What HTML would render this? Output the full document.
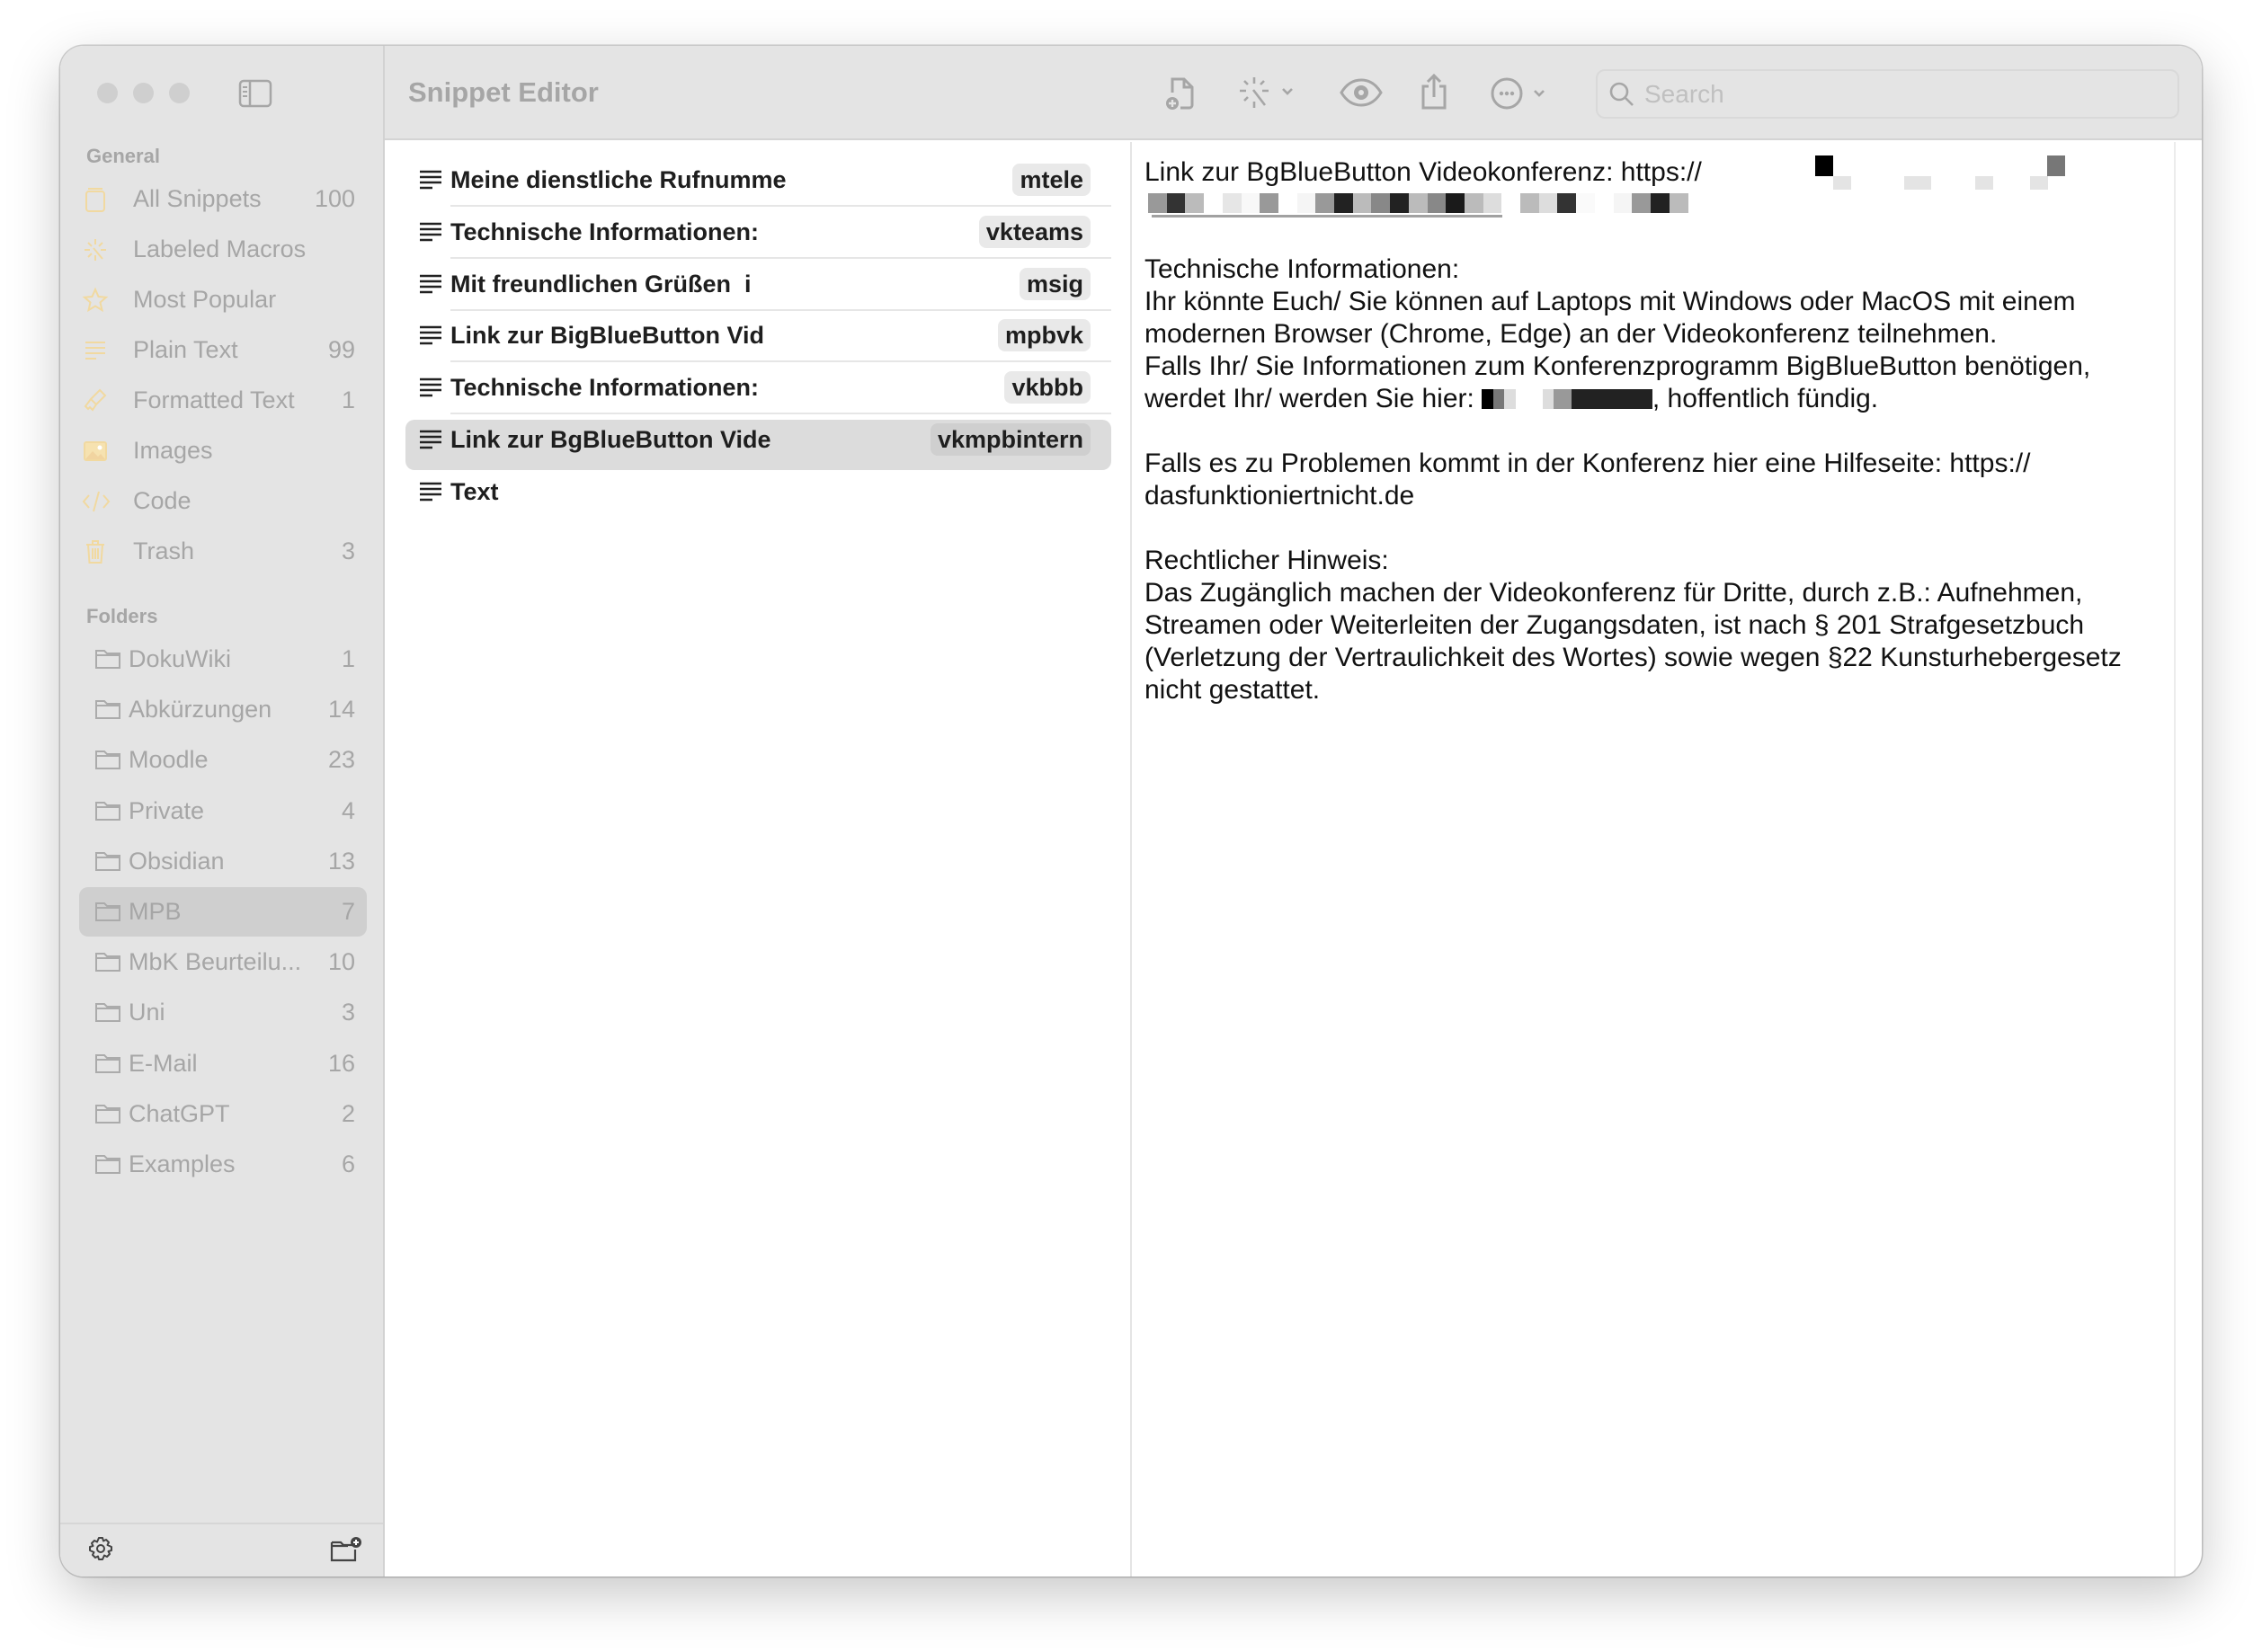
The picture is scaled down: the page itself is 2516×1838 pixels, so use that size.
<!DOCTYPE html>
<html><head><meta charset="utf-8"><style>
*{margin:0;padding:0;box-sizing:border-box}
body{width:2516px;height:1838px;background:#fff;position:relative;overflow:hidden;font-family:"Liberation Sans",Helvetica,Arial,sans-serif}
.win{position:absolute;left:67px;top:51px;width:2382px;height:1703px;border-radius:26px;background:#fff;overflow:hidden;box-shadow:0 20px 60px rgba(0,0,0,.22),0 0 0 1.5px rgba(0,0,0,.18)}
.side{position:absolute;left:0;top:0;width:361px;height:1703px;background:#e4e4e4;border-right:2px solid #d2d2d2}
.tb{position:absolute;left:361px;top:0;right:0;height:105px;background:#e4e4e4;border-bottom:2px solid #d4d4d4}
.a{position:absolute}
.sh{position:absolute;left:29px;font-size:22px;font-weight:bold;color:#a6a6a6}
.si{position:absolute;left:0;width:361px;height:56px;font-size:27px;color:#a6a6a6;line-height:56px}
.si .t{position:absolute;left:81px}
.si .c{position:absolute;right:33px}
.si svg{position:absolute;left:24px;top:14px}
.row{position:absolute;left:384px;width:785px;height:56px;line-height:56px;font-size:27px;font-weight:bold;color:#1e1e1e}
.row .t{position:absolute;left:50px}
.row svg{position:absolute;left:14px;top:16px}
.row .b{position:absolute;right:23px;top:10px;height:36px;line-height:36px;padding:0 8px;border-radius:8px;background:#e9e9e9}
.sep{position:absolute;left:434px;width:735px;height:2px;background:#e6e6e6}
.ed{position:absolute;left:1206px;top:123px;font-size:30px;color:#111;line-height:36px;white-space:pre}
.px{position:absolute;height:22px}
.ib{display:inline-block;width:190px;height:22px;vertical-align:-2px;margin-left:8px;background:linear-gradient(90deg,#000 0 13px,#777 13px 25px,#ddd 25px 38px,#fff 38px 68px,#ddd 68px 80px,#999 80px 100px,#222 100px 190px)}
</style></head><body>
<div class="win">
 <div class="side">
  <div class="a" style="left:41px;top:41px;width:23px;height:23px;border-radius:50%;background:#cfcfcf"></div>
  <div class="a" style="left:81px;top:41px;width:23px;height:23px;border-radius:50%;background:#cfcfcf"></div>
  <div class="a" style="left:121px;top:41px;width:23px;height:23px;border-radius:50%;background:#cfcfcf"></div>
  <svg class="a" style="left:198px;top:37px" width="38" height="32" viewBox="0 0 38 32"><rect x="2" y="2" width="34" height="28" rx="4" fill="none" stroke="#a6a6a6" stroke-width="2.5"/><line x1="13" y1="2" x2="13" y2="30" stroke="#a6a6a6" stroke-width="2.5"/><line x1="5" y1="9" x2="10" y2="9" stroke="#a6a6a6" stroke-width="2"/><line x1="5" y1="14" x2="10" y2="14" stroke="#a6a6a6" stroke-width="2"/><line x1="5" y1="19" x2="10" y2="19" stroke="#a6a6a6" stroke-width="2"/></svg>
  <div class="sh" style="top:110px">General</div>
  <div class="si" style="top:142px"><svg width="30" height="30" viewBox="0 0 30 30"><rect x="5" y="6" width="20" height="22" rx="3" fill="none" stroke="#f1d9a0" stroke-width="2"/><line x1="7" y1="3" x2="23" y2="3" stroke="#f1d9a0" stroke-width="2"/></svg><span class="t">All Snippets</span><span class="c">100</span></div>
  <div class="si" style="top:198px"><svg width="30" height="30" viewBox="0 0 30 30" stroke="#f1d9a0" stroke-width="2"><path d="M15 3v6M15 21v6M3 15h6M21 15h6M7 7l4 4M23 7l-4 4M7 23l4-4M13 13l10 12"/></svg><span class="t">Labeled Macros</span></div>
  <div class="si" style="top:254px"><svg width="30" height="30" viewBox="0 0 30 30"><path d="M15 3l3.5 8 8.5.8-6.5 5.7 2 8.5L15 21.5 7.5 26l2-8.5L3 11.8l8.5-.8z" fill="none" stroke="#f1d9a0" stroke-width="2"/></svg><span class="t">Most Popular</span></div>
  <div class="si" style="top:310px"><svg width="30" height="30" viewBox="0 0 30 30" stroke="#f1d9a0" stroke-width="2"><path d="M4 6h22M4 12h22M4 18h22M4 24h12"/></svg><span class="t">Plain Text</span><span class="c">99</span></div>
  <div class="si" style="top:366px"><svg width="30" height="30" viewBox="0 0 30 30" fill="none" stroke="#f1d9a0" stroke-width="2"><path d="M20 3l6 6-10 10-6-6zM10 13l-6 8 3 3 2-2 3 3 4-6"/></svg><span class="t">Formatted Text</span><span class="c">1</span></div>
  <div class="si" style="top:422px"><svg width="30" height="30" viewBox="0 0 30 30"><rect x="3" y="5" width="24" height="20" rx="2" fill="#f6e2b0" stroke="#f1d9a0" stroke-width="2"/><path d="M4 24l8-9 6 6 3-3 5 6z" fill="#f1d4a0"/><circle cx="20" cy="11" r="2.5" fill="#fff"/></svg><span class="t">Images</span></div>
  <div class="si" style="top:478px"><svg width="32" height="30" viewBox="0 0 32 30" fill="none" stroke="#f1d9a0" stroke-width="2"><path d="M8 8l-6 7 6 7M24 8l6 7-6 7M19 4l-6 22"/></svg><span class="t">Code</span></div>
  <div class="si" style="top:534px"><svg width="30" height="30" viewBox="0 0 30 30" fill="none" stroke="#f1d9a0" stroke-width="2"><path d="M5 7h20M12 7V3h6v4M7 7l1.5 20h13L23 7M12 11v12M15 11v12M18 11v12"/></svg><span class="t">Trash</span><span class="c">3</span></div>
  <div class="sh" style="top:622px">Folders</div>
  <div class="a" style="left:21px;top:936px;width:320px;height:55px;border-radius:10px;background:#cfcfcf"></div>
  <div id="folders"></div>
  <div class="a" style="left:0;top:1643px;width:359px;height:2px;background:#d6d6d6"></div>
  <svg class="a" style="left:30px;top:1657px" width="30" height="30" viewBox="0 0 30 30"><circle cx="15" cy="15" r="4" fill="none" stroke="#444" stroke-width="2"/><path d="M13 3h4l1 3.5 3-1.5 3 3-1.5 3L27 13v4l-3.5 1 1.5 3-3 3-3-1.5L17 27h-4l-1-3.5-3 1.5-3-3 1.5-3L3 17v-4l3.5-1L5 9l3-3 3 1.5z" fill="none" stroke="#444" stroke-width="2" stroke-linejoin="round"/></svg>
  <svg class="a" style="left:300px;top:1657px" width="38" height="32" viewBox="0 0 38 32" fill="none" stroke="#444" stroke-width="2.2"><path d="M2 8v20h26V16M2 8h10l3 3h10M2 12h18"/><circle cx="29" cy="8" r="6" fill="#444" stroke="none"/><path d="M29 5v6M26 8h6" stroke="#fff" stroke-width="2"/></svg>
 </div>
 <div class="tb">
  <div class="a" style="left:26px;top:34px;font-size:31px;font-weight:bold;color:#a6a6a6">Snippet Editor</div>
 </div>
 <svg class="a" style="left:1228px;top:34px" width="40" height="40" viewBox="0 0 40 40" fill="none" stroke="#a6a6a6" stroke-width="3"><path d="M9 18V3h13l9 9v20a3 3 0 0 1-3 3H18M22 3v9h9"/><circle cx="9" cy="30" r="7" fill="#a6a6a6" stroke="none"/><path d="M9 26v8M5 30h8" stroke="#e4e4e4" stroke-width="2.4"/></svg>
 <svg class="a" style="left:1310px;top:32px" width="70" height="40" viewBox="0 0 70 40" fill="none" stroke="#a6a6a6" stroke-width="2.6"><path d="M18 3v7M18 30v7M2 18h7M27 18h7M7 7l4 4M29 7l-4 4M7 29l4-4M17 17l13 17M50 16l5 5 5-5"/></svg>
 <svg class="a" style="left:1423px;top:36px" width="48" height="32" viewBox="0 0 48 32"><path d="M2 16C8 6 16 2 24 2s16 4 22 14c-6 10-14 14-22 14S8 26 2 16z" fill="none" stroke="#a6a6a6" stroke-width="3"/><circle cx="24" cy="16" r="8" fill="#a6a6a6"/><circle cx="24" cy="16" r="3" fill="#e4e4e4"/></svg>
 <svg class="a" style="left:1511px;top:30px" width="34" height="42" viewBox="0 0 34 42" fill="none" stroke="#a6a6a6" stroke-width="3"><path d="M11 15H5v24h24V15h-6M17 27V3M10 10l7-7 7 7"/></svg>
 <svg class="a" style="left:1590px;top:33px" width="70" height="40" viewBox="0 0 70 40"><circle cx="19" cy="20" r="16" fill="none" stroke="#a6a6a6" stroke-width="3"/><circle cx="13" cy="20" r="2.2" fill="#a6a6a6"/><circle cx="19" cy="20" r="2.2" fill="#a6a6a6"/><circle cx="25" cy="20" r="2.2" fill="#a6a6a6"/><path d="M50 17l5 5 5-5" fill="none" stroke="#a6a6a6" stroke-width="2.6"/></svg>
 <div class="a" style="left:1708px;top:26px;width:649px;height:55px;border-radius:10px;border:2px solid #d9d9d9;background:#e4e4e4"></div>
 <svg class="a" style="left:1722px;top:39px" width="30" height="30" viewBox="0 0 30 30" fill="none" stroke="#a6a6a6" stroke-width="2.6"><circle cx="12" cy="12" r="9"/><path d="M19 19l8 8"/></svg>
 <div class="a" style="left:1762px;top:38px;font-size:28px;color:#c0c0c0">Search</div>

 <div class="a" style="left:1190px;top:107px;width:2px;height:1596px;background:#e4e4e4"></div>
 <div class="a" style="left:2351px;top:107px;width:2px;height:1596px;background:#ececec"></div>

 <div class="a" style="left:384px;top:416px;width:785px;height:56px;border-radius:10px;background:#dcdcdc"></div>
 <div id="rows"></div>

 <div class="ed">Link zur BgBlueButton Videokonferenz: https://


Technische Informationen:
Ihr könnte Euch/ Sie können auf Laptops mit Windows oder MacOS mit einem
modernen Browser (Chrome, Edge) an der Videokonferenz teilnehmen.
Falls Ihr/ Sie Informationen zum Konferenzprogramm BigBlueButton benötigen,
werdet Ihr/ werden Sie hier:<span class="ib"></span>, hoffentlich fündig.

Falls es zu Problemen kommt in der Konferenz hier eine Hilfeseite: https://
dasfunktioniertnicht.de

Rechtlicher Hinweis:
Das Zugänglich machen der Videokonferenz für Dritte, durch z.B.: Aufnehmen,
Streamen oder Weiterleiten der Zugangsdaten, ist nach § 201 Strafgesetzbuch
(Verletzung der Vertraulichkeit des Wortes) sowie wegen §22 Kunsturhebergesetz
nicht gestattet.</div>
 <div id="px"></div>
</div>
<script>
var f=[["DokuWiki","1"],["Abkürzungen","14"],["Moodle","23"],["Private","4"],["Obsidian","13"],["MPB","7"],["MbK Beurteilu...","10"],["Uni","3"],["E-Mail","16"],["ChatGPT","2"],["Examples","6"]];
var h="";f.forEach(function(x,i){var t=654+56.2*i;h+='<div class="si" style="top:'+t+'px"><svg style="left:38px;top:16px" width="30" height="24" viewBox="0 0 30 24" fill="none" stroke="#ababab" stroke-width="2"><path d="M2 3h9l3 3h14v16H2zM2 8h26"/></svg><span class="t" style="left:76px">'+x[0]+'</span><span class="c">'+x[1]+'</span></div>';});
document.getElementById("folders").innerHTML=h;
var r=[["Meine dienstliche Rufnumme","mtele"],["Technische Informationen:","vkteams"],["Mit freundlichen Grüßen&nbsp; i","msig"],["Link zur BigBlueButton Vid","mpbvk"],["Technische Informationen:","vkbbb"],["Link zur BgBlueButton Vide","vkmpbintern"],["Text",""]];
h="";r.forEach(function(x,i){var t=121+57.8*i;h+='<div class="row" style="top:'+t+'px"><svg width="28" height="24" viewBox="0 0 28 24" stroke="#222" stroke-width="2.6"><path d="M2 3h24M2 9h24M2 15h24M2 21h14"/></svg><span class="t">'+x[0]+'</span>'+(x[1]?'<span class="b" style="'+(i==5?'background:#cfcfcf':'')+'">'+x[1]+'</span>':'')+'</div>';if(i<5)h+='<div class="sep" style="top:'+(t+56)+'px"></div>';});
document.getElementById("rows").innerHTML=h;
var g=["#999","#333","#bbb","#fff","#e6e6e6","#f8f8f8","#999","#fff","#f5f5f5","#999","#222","#bbb","#888","#222","#bbb","#888","#1a1a1a","#bbb","#ddd","#fff","#bbb","#ddd","#333","#fafafa","#fff","#f5f5f5","#999","#222","#bbb"];
h="";g.forEach(function(c,i){h+='<div class="px" style="left:'+(1210+i*20.7)+'px;top:164px;width:21px;background:'+c+'"></div>';});
h+='<div class="a" style="left:1214px;top:188px;width:390px;height:3px;background:#444;opacity:.5"></div>';
h+='<div class="px" style="left:1952px;top:122px;width:20px;height:23px;background:#000"></div><div class="px" style="left:2210px;top:122px;width:20px;height:23px;background:#777"></div>';
[[1972,20],[2051,30],[2130,20],[2191,20]].forEach(function(a){h+='<div class="px" style="left:'+a[0]+'px;top:145px;width:'+a[1]+'px;height:15px;background:#e4e4e4"></div>';});
document.getElementById("px").innerHTML=h;
</script>
</body></html>
